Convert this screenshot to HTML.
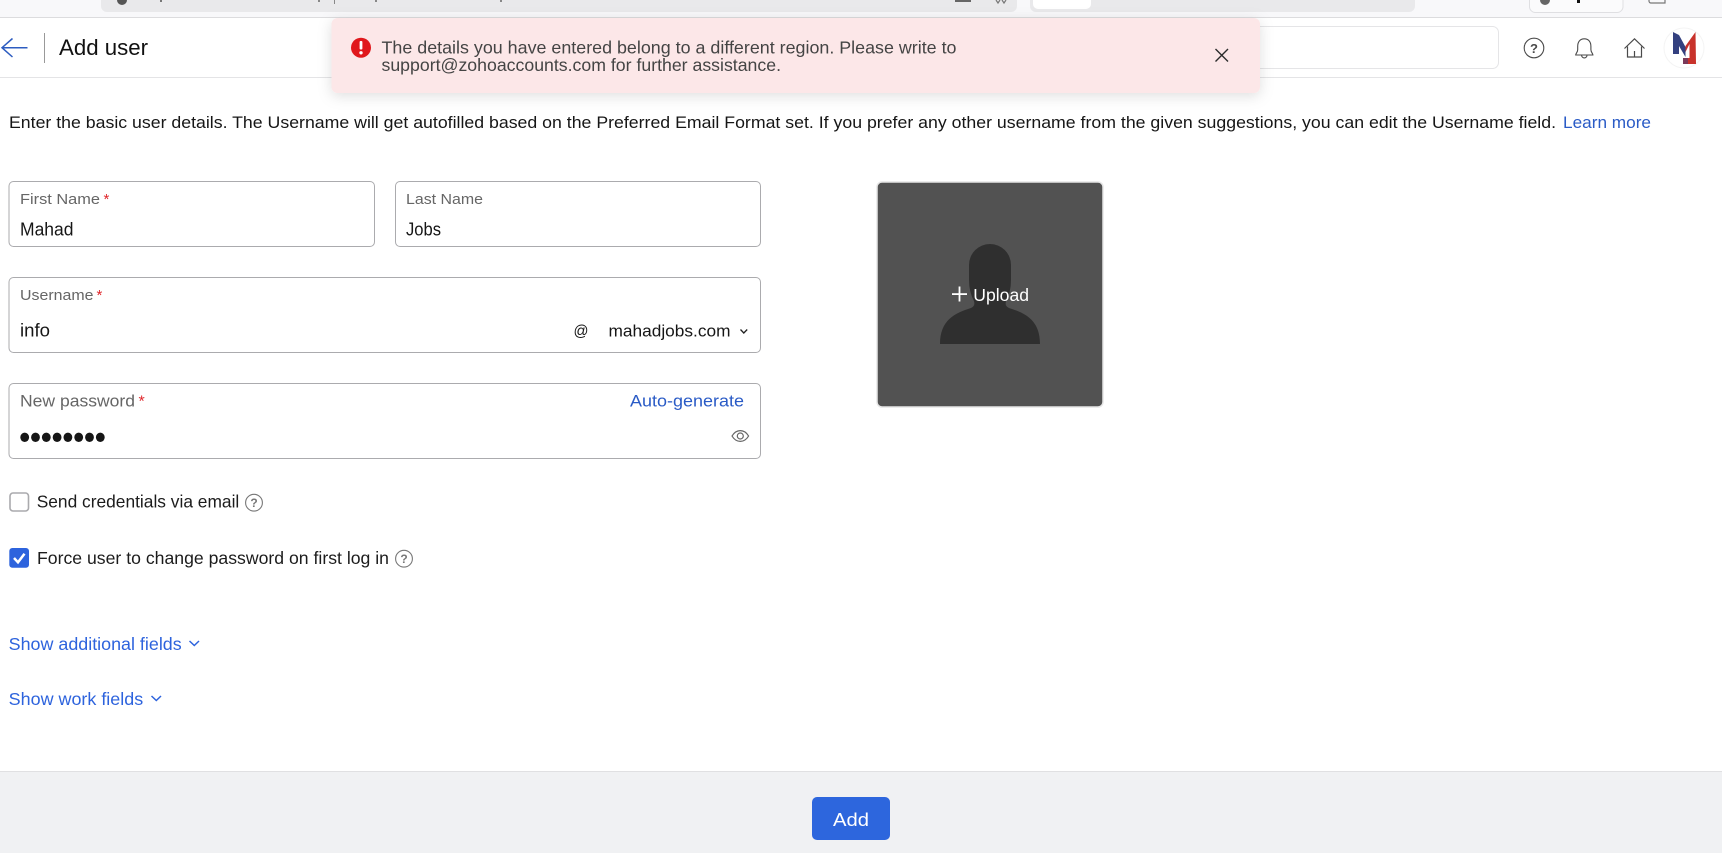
<!DOCTYPE html>
<html lang="en">
<head>
<meta charset="utf-8">
<title>Add user</title>
<style>
html,body{margin:0;padding:0;background:#fff;width:1722px;height:853px;overflow:hidden}
svg{display:block}
text{font-family:"Liberation Sans",sans-serif}
</style>
</head>
<body>
<svg width="1722" height="853" viewBox="0 0 1722 853" xmlns="http://www.w3.org/2000/svg">
<defs>
<filter id="sh" x="-10%" y="-30%" width="120%" height="170%"><feDropShadow dx="0" dy="3" stdDeviation="7" flood-color="#000" flood-opacity=".13"/></filter>
</defs>
<rect width="1722" height="853" fill="#fff"/>

<!-- browser chrome remnants -->
<rect x="0" y="0" width="1722" height="17" fill="#f8f8fa"/>
<rect x="0" y="17" width="1722" height="1" fill="#dcdcde"/>
<path d="M101 0H1017V6a6 6 0 0 1-6 6H107a6 6 0 0 1-6-6Z" fill="#e9e9eb"/>
<path d="M1030 0H1415V6a6 6 0 0 1-6 6H1036a6 6 0 0 1-6-6Z" fill="#e9e9eb"/>
<path d="M1033 0H1091V4a5 5 0 0 1-5 5H1038a5 5 0 0 1-5-5Z" fill="#fff"/>
<path d="M1529.500 0V6a6 6 0 0 0 6 6.500H1617a6 6 0 0 0 6-6.500V0" fill="#fbfbfc" stroke="#dfdfe2"/>
<path d="M117 0a5 5 0 0 0 10 0Z" fill="#555"/>
<rect x="160" y="0" width="2" height="2" fill="#777"/>
<rect x="334" y="0" width="1" height="4" fill="#888"/>
<rect x="318" y="0" width="2" height="2" fill="#888"/>
<rect x="375" y="0" width="2" height="2" fill="#888"/>
<rect x="500" y="0" width="2" height="2" fill="#888"/>
<rect x="955" y="0" width="16" height="2" fill="#666"/>
<path d="M1540 0a5 5 0 0 0 10 0Z" fill="#666"/>
<rect x="1577" y="0" width="3" height="3" fill="#111"/>
<path d="M1649 0V1a2 2 0 0 0 2 2H1665V0" fill="none" stroke="#777" stroke-width="1.200"/>
<path d="M996 0l2 3 2-3M1002 0l2 3 2-3" fill="none" stroke="#777" stroke-width="1.200"/>

<!-- header -->
<rect x="0" y="77" width="1722" height="1" fill="#e4e4e6"/>
<path d="M27.500 47.700H2.500M12.500 38.500L2 47.700L12.500 57" fill="none" stroke="#2d5cc0" stroke-width="1.500"/>
<rect x="44" y="33" width="1" height="30" fill="#999"/>
<text x="59" y="55" font-size="22.500" fill="#111" textLength="89" lengthAdjust="spacingAndGlyphs">Add user</text>

<rect x="1200" y="26.500" width="298.500" height="42" rx="6" fill="#fff" stroke="#e5e5e7"/>

<circle cx="1534" cy="48" r="9.800" fill="none" stroke="#4a4a4a" stroke-width="1.100"/>
<text x="1534" y="52.800" font-size="13" font-weight="bold" fill="#4a4a4a" text-anchor="middle">?</text>
<path d="M1584.300 38.800c-4.600 0-6.600 3.600-6.600 7.600v3.200c0 2.800-2 3.800-2 5.400h17.200c0-1.600-2-2.600-2-5.400v-3.200c0-4-2-7.600-6.600-7.600Z" fill="none" stroke="#4a4a4a" stroke-width="1.100"/>
<path d="M1581.600 55.200a2.700 2.700 0 0 0 5.400 0" fill="none" stroke="#4a4a4a" stroke-width="1.100"/>
<path d="M1624.500 48.500L1634.500 38.800L1644.500 48.500" fill="none" stroke="#4a4a4a" stroke-width="1.200"/>
<path d="M1627.500 46.500V57H1641.500V46.500M1634.500 57V51" fill="none" stroke="#4a4a4a" stroke-width="1.200"/>

<circle cx="1684" cy="48" r="20" fill="#fff" stroke="#f4f4f4"/>
<path d="M1673 32L1679 35L1685.500 47V57L1679 46V54H1673Z" fill="#33407f"/>
<path d="M1695.500 32L1696 64H1683V58H1689.500V44L1685.500 52V46Z" fill="#c8322b"/>
<path d="M1683 58H1688V64H1683Z" fill="#7a3a5a"/>

<!-- intro -->
<text x="9" y="128" font-size="17" fill="#161616" textLength="1547" lengthAdjust="spacingAndGlyphs">Enter the basic user details. The Username will get autofilled based on the Preferred Email Format set. If you prefer any other username from the given suggestions, you can edit the Username field.</text>
<text x="1563" y="128" font-size="17" fill="#2a5bc6" textLength="88" lengthAdjust="spacingAndGlyphs">Learn more</text>

<!-- fields -->
<g fill="#fff" stroke="#ababae" stroke-width="1">
<rect x="9" y="181.500" width="365.500" height="65" rx="4.500"/>
<rect x="395.500" y="181.500" width="365" height="65" rx="4.500"/>
<rect x="9" y="277.500" width="751.500" height="75" rx="4.500"/>
<rect x="9" y="383.500" width="751.500" height="75" rx="4.500"/>
</g>

<text x="20" y="204" font-size="15" fill="#666" textLength="80" lengthAdjust="spacingAndGlyphs">First Name</text>
<text x="103.500" y="204" font-size="15" fill="#e0262b">*</text>
<text x="20" y="235.500" font-size="18" fill="#161616" textLength="53.500" lengthAdjust="spacingAndGlyphs">Mahad</text>
<text x="406" y="204" font-size="15" fill="#666" textLength="77" lengthAdjust="spacingAndGlyphs">Last Name</text>
<text x="406" y="235.500" font-size="18" fill="#161616" textLength="35" lengthAdjust="spacingAndGlyphs">Jobs</text>

<text x="20" y="300" font-size="15" fill="#666" textLength="73.500" lengthAdjust="spacingAndGlyphs">Username</text>
<text x="96.500" y="300" font-size="15" fill="#e0262b">*</text>
<text x="20" y="336.500" font-size="18" fill="#161616" textLength="30" lengthAdjust="spacingAndGlyphs">info</text>
<text x="573.500" y="336" font-size="16" fill="#161616" textLength="15" lengthAdjust="spacingAndGlyphs">@</text>
<text x="608.500" y="336.500" font-size="17" fill="#161616" textLength="122" lengthAdjust="spacingAndGlyphs">mahadjobs.com</text>
<path d="M740.500 329.500L743.800 333L747.200 329.500" fill="none" stroke="#222" stroke-width="1.300"/>

<text x="20" y="406.500" font-size="17" fill="#666" textLength="115" lengthAdjust="spacingAndGlyphs">New password</text>
<text x="138.500" y="406.500" font-size="16" fill="#e0262b">*</text>
<text x="630" y="406.500" font-size="17" fill="#2a5bc6" textLength="114" lengthAdjust="spacingAndGlyphs">Auto-generate</text>
<g fill="#161616">
<ellipse cx="24.700" cy="437.300" rx="4.400" ry="4.700"/><ellipse cx="35.500" cy="437.300" rx="4.400" ry="4.700"/><ellipse cx="46.300" cy="437.300" rx="4.400" ry="4.700"/><ellipse cx="57.100" cy="437.300" rx="4.400" ry="4.700"/><ellipse cx="67.900" cy="437.300" rx="4.400" ry="4.700"/><ellipse cx="78.700" cy="437.300" rx="4.400" ry="4.700"/><ellipse cx="89.500" cy="437.300" rx="4.400" ry="4.700"/><ellipse cx="100.300" cy="437.300" rx="4.400" ry="4.700"/>
</g>
<path d="M732 436c2.200-3.700 5-5.400 8.300-5.400s6.100 1.700 8.300 5.400c-2.200 3.700-5 5.400-8.300 5.400s-6.100-1.700-8.300-5.400Z" fill="none" stroke="#666" stroke-width="1.200"/>
<circle cx="740.300" cy="436" r="3" fill="none" stroke="#666" stroke-width="1.200"/>

<!-- checkboxes -->
<rect x="10" y="493" width="18.500" height="18" rx="3" fill="#fff" stroke="#aaaaad" stroke-width="1.600"/>
<text x="36.700" y="507.500" font-size="17.500" fill="#1c1c1c" textLength="202.600" lengthAdjust="spacingAndGlyphs">Send credentials via email</text>
<circle cx="254" cy="502.700" r="8.400" fill="#fff" stroke="#777" stroke-width="1.100"/>
<text x="254" y="507.200" font-size="12" font-weight="bold" fill="#777" text-anchor="middle">?</text>

<rect x="9.300" y="548" width="19.700" height="19.700" rx="3" fill="#2d63dd"/>
<path d="M14 558L18 562.300L24.500 553.800" fill="none" stroke="#fff" stroke-width="2.500"/>
<text x="37" y="564" font-size="17.500" fill="#1c1c1c" textLength="352" lengthAdjust="spacingAndGlyphs">Force user to change password on first log in</text>
<circle cx="404" cy="558.700" r="8.400" fill="#fff" stroke="#777" stroke-width="1.100"/>
<text x="404" y="563.200" font-size="12" font-weight="bold" fill="#777" text-anchor="middle">?</text>

<!-- links -->
<text x="8.700" y="650" font-size="17.500" fill="#2d63dd" textLength="173" lengthAdjust="spacingAndGlyphs">Show additional fields</text>
<path d="M189.500 641L194.300 645.500L199 641" fill="none" stroke="#2d63dd" stroke-width="1.500"/>
<text x="8.700" y="705" font-size="17.500" fill="#2d63dd" textLength="134.500" lengthAdjust="spacingAndGlyphs">Show work fields</text>
<path d="M151.500 696L156.300 700.500L161 696" fill="none" stroke="#2d63dd" stroke-width="1.500"/>

<!-- photo -->
<rect x="877" y="182" width="226" height="225" rx="5" fill="#525252" stroke="#e6e6e6" stroke-width="1.500"/>
<path d="M969 265a21 21 0 0 1 42 0V280q0 12-5 21q-1.500 5 3 7C1025 313 1040 320 1040 344H940C940 320 955 313 971 308q4.500-2 3-7q-5-9-5-21Z" fill="#2f2f2f"/>
<rect x="952" y="293.200" width="15" height="1.800" fill="#fff"/>
<rect x="958.600" y="286.500" width="1.800" height="15" fill="#fff"/>
<text x="973.300" y="301" font-size="17.500" fill="#fff" textLength="55.700" lengthAdjust="spacingAndGlyphs">Upload</text>

<!-- banner -->
<rect x="331.500" y="18" width="928.500" height="75" rx="6" fill="#fce7e8" filter="url(#sh)"/>
<circle cx="361" cy="47.700" r="10" fill="#e0181c"/>
<rect x="359.600" y="41" width="2.800" height="8.500" rx="1" fill="#fff"/>
<circle cx="361" cy="52.800" r="1.700" fill="#fff"/>
<text x="381.500" y="53.300" font-size="17.500" fill="#444" textLength="575" lengthAdjust="spacingAndGlyphs">The details you have entered belong to a different region. Please write to</text>
<text x="381.500" y="71" font-size="17.500" fill="#444" textLength="399.500" lengthAdjust="spacingAndGlyphs">support@zohoaccounts.com for further assistance.</text>
<path d="M1215.500 49L1228 61.500M1228 49L1215.500 61.500" fill="none" stroke="#2b2b2b" stroke-width="1.400"/>

<!-- footer -->
<rect x="0" y="771" width="1722" height="82" fill="#f0f1f3"/>
<rect x="0" y="771" width="1722" height="1" fill="#e0e0e2"/>
<rect x="812" y="797" width="78" height="43" rx="5" fill="#2d66dd"/>
<text x="833" y="826" font-size="18.500" fill="#fff" textLength="36" lengthAdjust="spacingAndGlyphs">Add</text>
</svg>
</body>
</html>
